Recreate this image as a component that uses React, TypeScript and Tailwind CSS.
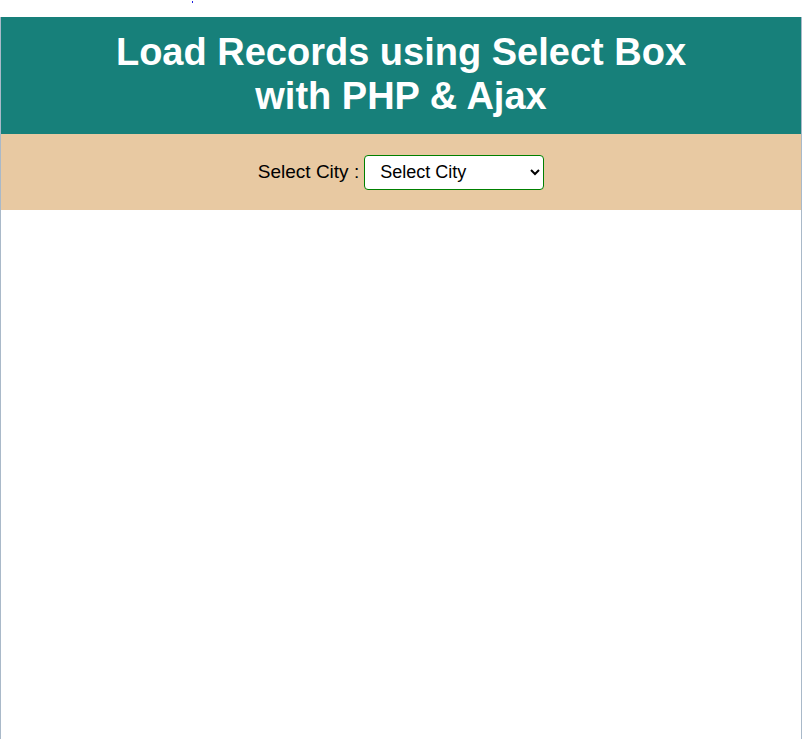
import React from "react";

const cities = ["Select City", "Delhi", "Mumbai", "Kolkata", "Chennai"];

export default function App() {
  return (
    <div className="min-h-[739px] bg-white font-['Liberation_Sans',Arial,sans-serif]">
      {/* stray link dot above the container */}
      <div className="h-[16px]">
        <span className="ml-[192px] mt-[1px] block h-[2px] w-[1px] bg-[#2020e0]" />
      </div>

      <div className="min-h-[723px] border-x border-[#a9b9c9] bg-white">
        <header className="bg-[#17807a] pt-[14px] pb-[16px] text-center">
          <h1 className="text-[38px] font-bold leading-[1.15] text-white">
            Load Records using Select Box
            <br />
            with PHP &amp; Ajax
          </h1>
        </header>

        <div className="flex h-[76px] items-center justify-center bg-[#e8c9a2]">
          <label htmlFor="city" className="mr-[5px] text-[19px] text-black">
            Select City :
          </label>
          <select
            id="city"
            defaultValue="Select City"
            className="h-[35px] w-[180px] rounded-[4px] border border-[#008000] bg-white px-[11px] text-[18px] text-black"
          >
            {cities.map((c) => (
              <option key={c} value={c}>
                {c}
              </option>
            ))}
          </select>
        </div>
      </div>
    </div>
  );
}
